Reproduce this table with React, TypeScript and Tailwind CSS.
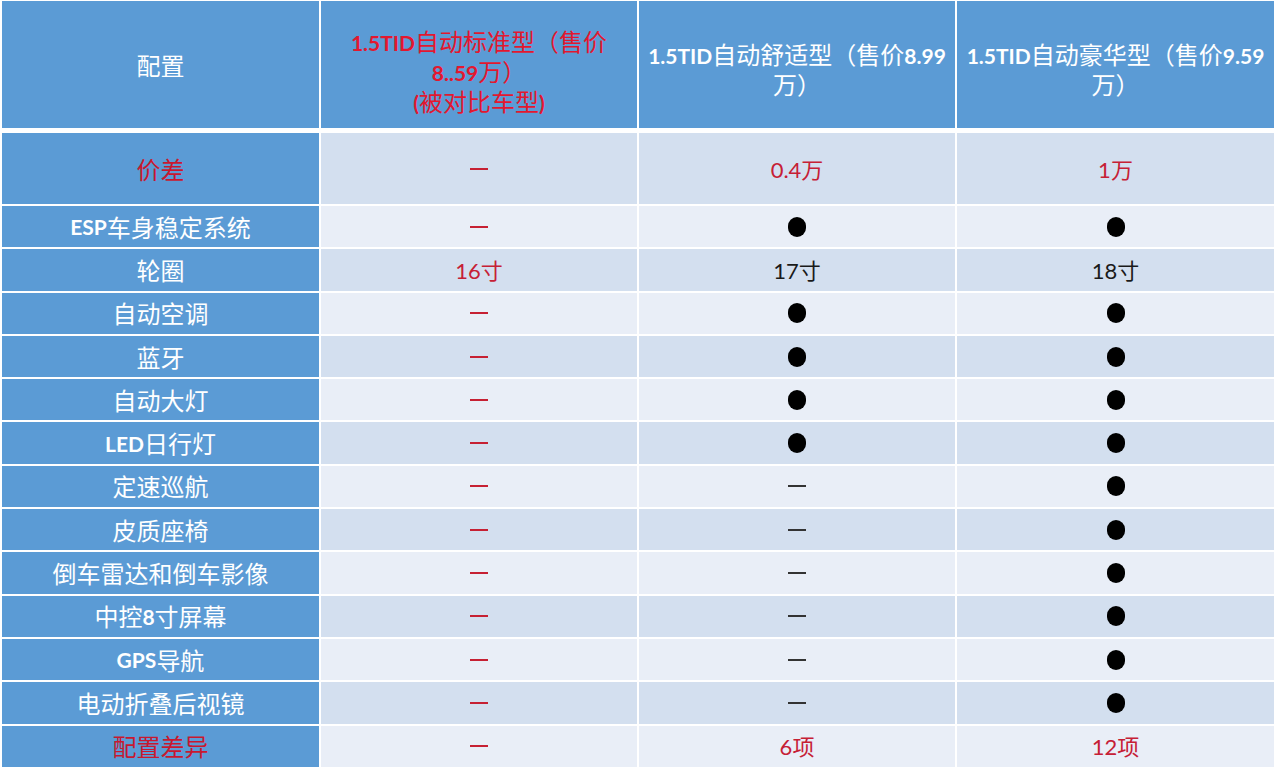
import React from 'react';

type Cell = { kind: 'dash' | 'dot' | 'text'; red?: boolean; text?: string };

interface Row {
  label: string;
  redLabel?: boolean;
  cells: Cell[];
  tall?: boolean;
}

const redDash: Cell = { kind: 'dash', red: true };
const dash: Cell = { kind: 'dash' };
const dot: Cell = { kind: 'dot' };

const rows: Row[] = [
  {
    label: '价差',
    redLabel: true,
    tall: true,
    cells: [redDash, { kind: 'text', red: true, text: '0.4万' }, { kind: 'text', red: true, text: '1万' }]
  },
  { label: 'ESP车身稳定系统', cells: [redDash, dot, dot] },
  {
    label: '轮圈',
    cells: [
      { kind: 'text', red: true, text: '16寸' },
      { kind: 'text', text: '17寸' },
      { kind: 'text', text: '18寸' }
    ]
  },
  { label: '自动空调', cells: [redDash, dot, dot] },
  { label: '蓝牙', cells: [redDash, dot, dot] },
  { label: '自动大灯', cells: [redDash, dot, dot] },
  { label: 'LED日行灯', cells: [redDash, dot, dot] },
  { label: '定速巡航', cells: [redDash, dash, dot] },
  { label: '皮质座椅', cells: [redDash, dash, dot] },
  { label: '倒车雷达和倒车影像', cells: [redDash, dash, dot] },
  { label: '中控8寸屏幕', cells: [redDash, dash, dot] },
  { label: 'GPS导航', cells: [redDash, dash, dot] },
  { label: '电动折叠后视镜', cells: [redDash, dash, dot] },
  {
    label: '配置差异',
    redLabel: true,
    cells: [redDash, { kind: 'text', red: true, text: '6项' }, { kind: 'text', red: true, text: '12项' }]
  }
];

// latin runs are set in a bold sans like the original slide
const Mixed: React.FC<{ text: string; boldLatin?: boolean }> = ({ text, boldLatin }) => {
  const parts = text.split(/([A-Za-z0-9.()]+)/);
  return (
    <>
      {parts.map((p, i) =>
        /^[A-Za-z0-9.()]+$/.test(p) ? (
          <span key={i} className={`font-['Lato',sans-serif] ${boldLatin ? 'font-bold text-[21px]' : 'text-[22px]'}`}>
            {p}
          </span>
        ) : (
          <span key={i}>{p}</span>
        )
      )}
    </>
  );
};

const DataCell: React.FC<{ cell: Cell }> = ({ cell }) => {
  if (cell.kind === 'dot') return <div className="w-[18px] h-[20px] rounded-full bg-black" />;
  if (cell.kind === 'dash')
    return <div className={`w-[18px] h-[2px] ${cell.red ? 'bg-[#c62033]' : 'bg-[#333]'}`} />;
  return (
    <span className={`text-[22px] ${cell.red ? 'text-[#c62035]' : 'text-[#1a1a1a]'}`}>
      <Mixed text={cell.text || ''} />
    </span>
  );
};

const HeaderLines: React.FC<{ lines: string[]; className: string }> = ({ lines, className }) => (
  <div className={`h-[127px] bg-[#5b9bd5] flex flex-col items-center justify-center text-center whitespace-nowrap ${className}`}>
    {lines.map(l => (
      <div key={l} className="h-[30px] leading-[30px]">
        <Mixed text={l} boldLatin />
      </div>
    ))}
  </div>
);

export default function App() {
  return (
    <div className="w-[1280px] h-[778px] bg-white pt-[1px] pl-[2px] font-['Noto_Sans_CJK_SC',sans-serif] text-[24px] leading-none">
      <div className="w-[1274px] grid grid-cols-[317px_316px_316px_317px] gap-x-[2px]">
        {/* header */}
        <div className="h-[127px] bg-[#5b9bd5] flex items-center justify-center text-white">配置</div>
        <HeaderLines
          lines={['1.5TID自动标准型（售价', '8..59万）', '(被对比车型)']}
          className="text-[#e3172f] pt-[12px]"
        />
        <HeaderLines lines={['1.5TID自动舒适型（售价8.99', '万）']} className="text-white pt-[8px]" />
        <HeaderLines lines={['1.5TID自动豪华型（售价9.59', '万）']} className="text-white pt-[8px]" />
      </div>

      <div className="w-[1274px] mt-[5px] grid grid-cols-[317px_316px_316px_317px] gap-[2px]">
        {rows.map((row, ri) => {
          const bg = ri % 2 === 0 ? 'bg-[#d3dfef]' : 'bg-[#e9eef7]';
          const h = row.tall ? 'h-[71px]' : 'h-[41.3px]';
          return (
            <React.Fragment key={row.label}>
              <div
                className={`${h} bg-[#5b9bd5] flex items-center justify-center ${
                  row.redLabel ? 'text-[#c8182f]' : 'text-white'
                }`}
              >
                <Mixed text={row.label} boldLatin />
              </div>
              {row.cells.map((c, ci) => (
                <div key={ci} className={`${h} ${bg} flex items-center justify-center`}>
                  <DataCell cell={c} />
                </div>
              ))}
            </React.Fragment>
          );
        })}
      </div>
    </div>
  );
}
